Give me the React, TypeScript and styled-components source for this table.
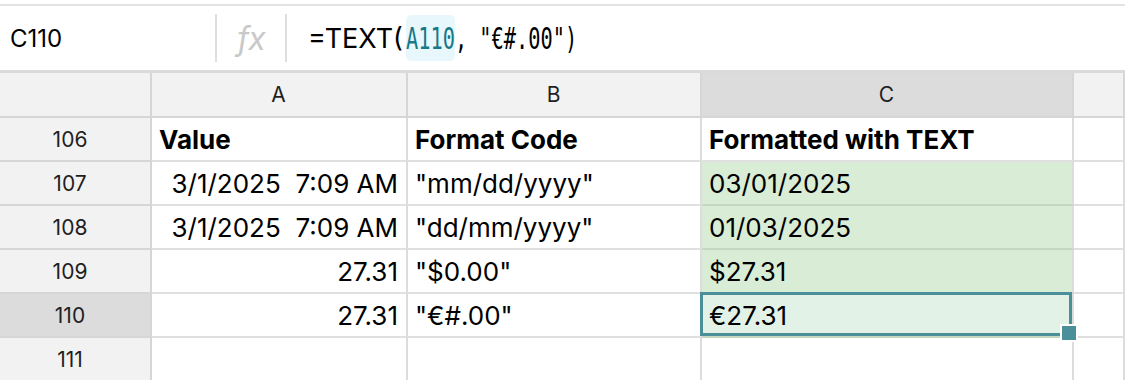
import styled, { createGlobalStyle, css } from "styled-components";

const GlobalStyle = createGlobalStyle`
  body {
    margin: 0;
    background: #ffffff;
    font-family: Inter, "Noto Sans", sans-serif;
    color: #000000;
  }
`;

const Page = styled.div`
  width: 1125px;
  height: 380px;
  overflow: hidden;
  padding-top: 4px;
  box-sizing: border-box;
`;

const FormulaBar = styled.div`
  display: flex;
  align-items: center;
  height: 64px;
  border-top: 2px solid #e3e3e3;
  border-bottom: 3px solid #dadada;
`;

const NameBox = styled.div`
  width: 205px;
  padding-left: 10px;
  font-size: 24px;
`;

const Divider = styled.div`
  width: 2px;
  height: 48px;
  background: #dedede;
`;

const Fx = styled.div`
  width: 68px;
  text-align: center;
  font-size: 32px;
  font-style: italic;
  color: #c9c9c9;
  letter-spacing: -1px;
`;

const Formula = styled.div`
  display: flex;
  align-items: center;
  padding-left: 21px;
  font-size: 27px;
  white-space: pre;
`;

const Mono = styled.span`
  display: inline-block;
  margin-left: 3px;
  font-family: "DejaVu Sans Mono", "Liberation Mono", monospace;
  font-size: 31px;
  transform: scaleX(0.655);
  transform-origin: left center;
  white-space: pre;
`;

const Ref = styled.span`
  color: #17788a;
  background: #e7f7fb;
  border-radius: 7px;
  padding: 5px 0;
`;

const Grid = styled.div`
  display: grid;
  grid-template-columns: 152px 256px 294px 372px 1fr;
  grid-template-rows: 45px repeat(6, 44px);
`;

type Kind = "corner" | "colHead" | "rowHead" | "body";

const Cell = styled.div<{
  $kind: Kind;
  $active?: boolean;
  $green?: boolean;
  $selected?: boolean;
  $right?: boolean;
  $bold?: boolean;
}>`
  position: relative;
  display: flex;
  align-items: center;
  box-sizing: border-box;
  padding: 0 8px 0 7px;
  border-right: 2px solid #dcdcdc;
  border-bottom: 2px solid #e0e0e0;
  font-size: 26px;
  white-space: pre;
  justify-content: ${(p) => (p.$right ? "flex-end" : "flex-start")};
  font-weight: ${(p) => (p.$bold ? 700 : 400)};

  ${(p) =>
    (p.$kind === "colHead" || p.$kind === "rowHead" || p.$kind === "corner") &&
    css`
      background: ${p.$active ? "#dcdcdc" : "#f2f2f2"};
      border-color: #d6d6d6;
      justify-content: center;
      font-size: 21px;
      color: #1f1f1f;
    `}

  ${(p) =>
    p.$kind === "rowHead" &&
    css`
      padding: 0 10px 0 0;
    `}

  ${(p) =>
    p.$green &&
    css`
      background: #d9ecd5;
      border-bottom-color: #c4d8c0;
    `}

  ${(p) =>
    p.$selected &&
    css`
      background: #e2f2e6;
    `}
`;

const Selection = styled.div`
  position: absolute;
  top: -2px;
  left: -2px;
  right: 0;
  bottom: 0;
  border: 3px solid #4a8f9a;
  pointer-events: none;
  z-index: 2;
`;

const Handle = styled.div`
  position: absolute;
  right: -6px;
  bottom: -6px;
  width: 14px;
  height: 14px;
  background: #4a8f9a;
  border: 2px solid #ffffff;
  z-index: 3;
`;

interface Row {
  num: number;
  a: string;
  b: string;
  c: string;
  bold?: boolean;
}

const rows: Row[] = [
  { num: 106, a: "Value", b: "Format Code", c: "Formatted with TEXT", bold: true },
  { num: 107, a: "3/1/2025  7:09 AM", b: '"mm/dd/yyyy"', c: "03/01/2025" },
  { num: 108, a: "3/1/2025  7:09 AM", b: '"dd/mm/yyyy"', c: "01/03/2025" },
  { num: 109, a: "27.31", b: '"$0.00"', c: "$27.31" },
  { num: 110, a: "27.31", b: '"€#.00"', c: "€27.31" },
  { num: 111, a: "", b: "", c: "" },
];

const activeRow = 110;

export default function App() {
  return (
    <Page>
      <GlobalStyle />
      <FormulaBar>
        <NameBox>C110</NameBox>
        <Divider />
        <Fx>fx</Fx>
        <Divider />
        <Formula>
          =TEXT(
          <Mono>
            <Ref>A110</Ref>, "€#.00")
          </Mono>
        </Formula>
      </FormulaBar>
      <Grid>
        <Cell $kind="corner" />
        <Cell $kind="colHead">A</Cell>
        <Cell $kind="colHead">B</Cell>
        <Cell $kind="colHead" $active>
          C
        </Cell>
        <Cell $kind="colHead" />
        {rows.map((r) => {
          const green = r.num >= 107 && r.num <= 110;
          const selected = r.num === activeRow;
          return [
            <Cell key={`h${r.num}`} $kind="rowHead" $active={selected}>
              {r.num}
            </Cell>,
            <Cell key={`a${r.num}`} $kind="body" $bold={r.bold} $right={!r.bold}>
              {r.a}
            </Cell>,
            <Cell key={`b${r.num}`} $kind="body" $bold={r.bold}>
              {r.b}
            </Cell>,
            <Cell
              key={`c${r.num}`}
              $kind="body"
              $bold={r.bold}
              $green={green}
              $selected={selected}
            >
              {r.c}
              {selected && (
                <>
                  <Selection />
                  <Handle />
                </>
              )}
            </Cell>,
            <Cell key={`d${r.num}`} $kind="body" />,
          ];
        })}
      </Grid>
    </Page>
  );
}
